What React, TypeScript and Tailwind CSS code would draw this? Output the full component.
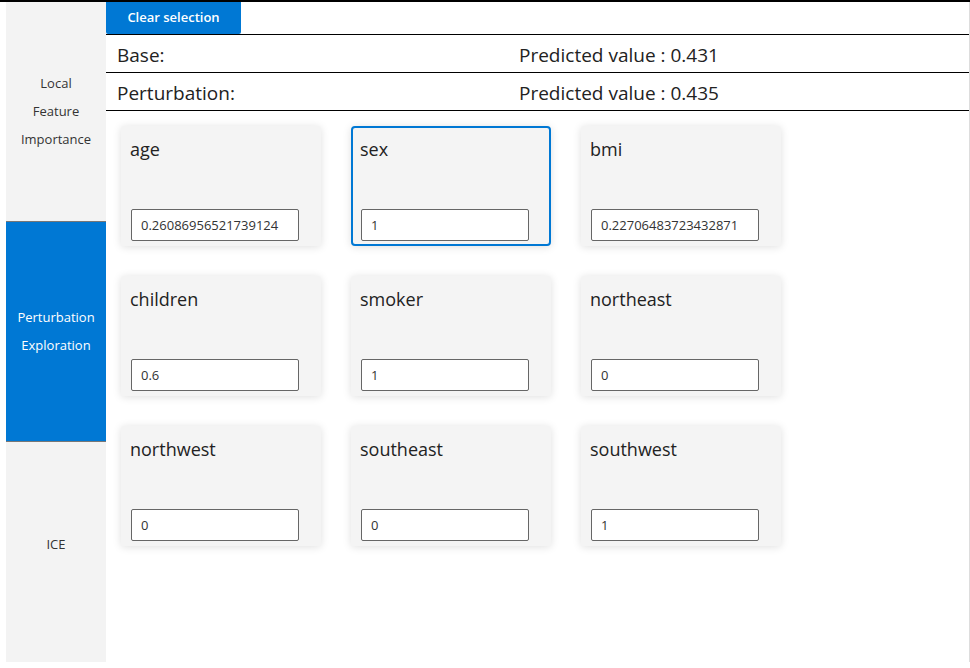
const features = [
  { name: "age", value: "0.26086956521739124" },
  { name: "sex", value: "1", selected: true },
  { name: "bmi", value: "0.22706483723432871" },
  { name: "children", value: "0.6" },
  { name: "smoker", value: "1" },
  { name: "northeast", value: "0" },
  { name: "northwest", value: "0" },
  { name: "southeast", value: "0" },
  { name: "southwest", value: "1" },
];

const FeatureCard = ({ name, value, selected }: { name: string; value: string; selected?: boolean }) => (
  <div
    className={
      selected
        ? "flex h-[120px] w-[200px] flex-col justify-between rounded-[4px] border-2 border-[#0078d4] bg-[#f4f4f4] pb-[3px] pl-[8px] pt-[9px] shadow-[0_1px_8px_rgba(0,0,0,0.13)]"
        : "flex h-[120px] w-[200px] flex-col justify-between rounded-[3px] bg-[#f4f4f4] pb-[5px] pl-[10px] pt-[11px] shadow-[0_1px_8px_rgba(0,0,0,0.13)]"
    }
  >
    <div className="-ml-px text-[18px] leading-[24px] text-[#222]">{name}</div>
    <input
      defaultValue={value}
      className="h-[32px] w-[168px] rounded-[2px] border border-[#666] bg-white px-[9px] text-[13px] text-[#333] outline-none"
    />
  </div>
);

export default function App() {
  return (
    <div className="flex h-[668px] w-[970px] flex-col bg-white font-['Open_Sans',sans-serif]">
      <div className="h-[2px] w-full bg-black" />
      <div className="flex flex-1 pb-[6px]">
        <nav className="ml-[6px] flex w-[100px] flex-col bg-[#f3f3f3] text-[13px] leading-[28px]">
          <div className="flex h-[219px] items-center justify-center pb-[2px] text-center text-[#333]">
            Local<br />Feature<br />Importance
          </div>
          <div className="flex h-[221px] items-center justify-center border-y border-[#777] bg-[#0078d4] pb-[2px] text-center text-white">
            Perturbation<br />Exploration
          </div>
          <div className="flex flex-1 items-center justify-center pb-[16px] text-[#333]">ICE</div>
        </nav>
        <main className="flex flex-1 flex-col border-r border-[#ddd]">
          <div className="flex h-[33px] border-b border-black">
            <button className="h-[32px] w-[135px] rounded-b-[2px] bg-[#0078d4] text-[13px] font-semibold text-white">
              Clear selection
            </button>
          </div>
          <div className="flex h-[38px] items-center border-b border-black pt-[3px] text-[19px] text-[#222]">
            <div className="w-[413px] pl-[11px]">Base:</div>
            <div>Predicted value : 0.431</div>
          </div>
          <div className="flex h-[38px] items-center border-b border-black pt-[3px] text-[19px] text-[#222]">
            <div className="w-[413px] pl-[11px]">Perturbation:</div>
            <div>Predicted value : 0.435</div>
          </div>
          <div className="grid grid-cols-[200px_200px_200px] gap-[30px] pl-[15px] pt-[15px]">
            {features.map((f) => (
              <FeatureCard key={f.name} {...f} />
            ))}
          </div>
        </main>
      </div>
    </div>
  );
}
